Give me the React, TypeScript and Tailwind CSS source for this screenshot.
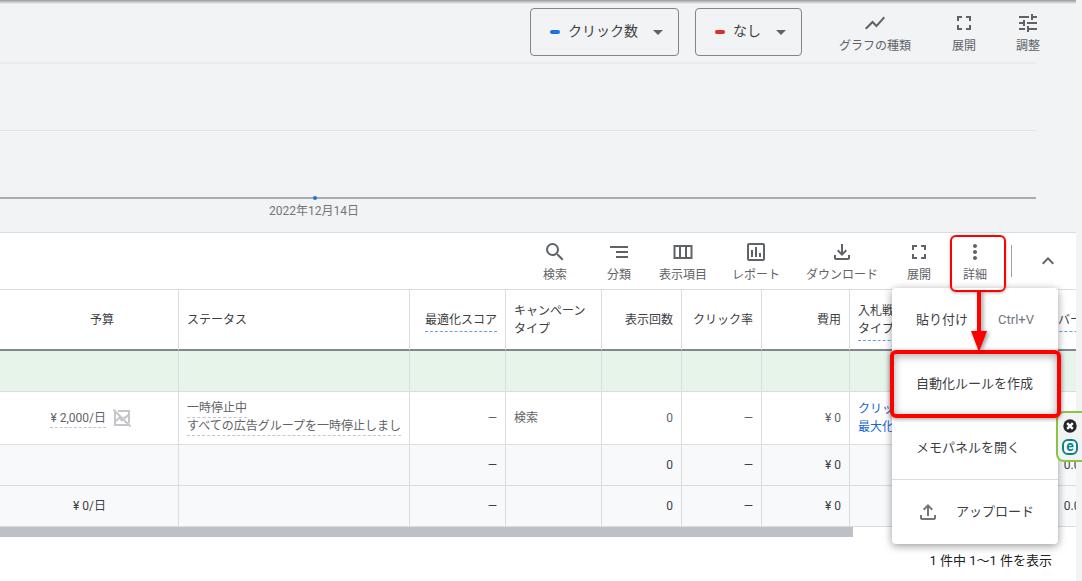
import type { ReactNode } from "react";
import type { IconType } from "react-icons";
import {
  MdArrowDropDown,
  MdExpandLess,
  MdFullscreen,
  MdMoreVert,
  MdOutlineAssessment,
  MdOutlineFileDownload,
  MdOutlineFileUpload,
  MdSearch,
  MdSegment,
  MdShowChart,
  MdTune,
} from "react-icons/md";

function ColumnsIcon({ className }: { className?: string }) {
  return (
    <svg viewBox="0 0 24 24" className={className} fill="none" stroke="currentColor" strokeWidth="2">
      <path d="M3.5 6h17v12h-17zM9 6v12M15 6v12" />
    </svg>
  );
}

function ChartOffIcon() {
  return (
    <svg viewBox="0 0 18 18" className="size-[18px] shrink-0 text-[#c4c6c9]" fill="none" stroke="currentColor" strokeWidth="2">
      <path d="M5 2h11v12M2 3v13h13" />
      <path d="M3 12l3.500-3.500L9.500 12M10.500 8l1.500 1L16 5.500" />
      <path d="M.5.8l17 16.700" />
    </svg>
  );
}

function MetricSelect({ label, options, dash }: { label: string; options: string[]; dash: string }) {
  return (
    <label className="relative flex h-12 items-center rounded border border-[#80868b] pl-[19px]">
      <span className={`h-1 w-[10px] rounded-sm ${dash}`} />
      <select aria-label={label} className="h-full appearance-none bg-transparent pr-10 pb-[2px] pl-2 text-sm text-[#3c4043] outline-none">
        {options.map((o) => (
          <option key={o}>{o}</option>
        ))}
      </select>
      <MdArrowDropDown className="pointer-events-none absolute right-2 size-6 text-[#5f6368]" />
    </label>
  );
}

function ToolButton({ icon: Icon, label, size }: { icon: IconType | typeof ColumnsIcon; label: string; size: string }) {
  return (
    <button type="button" className={`flex flex-col items-center pt-1 text-xs leading-[22px] text-[#5f6368] ${size}`}>
      <Icon className="size-6" />
      {label}
    </button>
  );
}

const tools = [
  { icon: MdSearch, label: "検索", size: "w-[72px]" },
  { icon: MdSegment, label: "分類", size: "w-14" },
  { icon: ColumnsIcon, label: "表示項目", size: "px-3" },
  { icon: MdOutlineAssessment, label: "レポート", size: "px-[13px]" },
  { icon: MdOutlineFileDownload, label: "ダウンロード", size: "px-[13px]" },
  { icon: MdFullscreen, label: "展開", size: "w-14" },
  { icon: MdMoreVert, label: "詳細", size: "w-14" },
];

function Th({ children, className = "" }: { children: ReactNode; className?: string }) {
  return <th className={`h-[61px] border-r border-b-2 border-r-[#dadce0] border-b-[#80868b] px-2 font-normal whitespace-nowrap ${className}`}>{children}</th>;
}

function Td({ children, className = "" }: { children?: ReactNode; className?: string }) {
  return <td className={`overflow-hidden border-r border-b border-[#dadce0] px-2 whitespace-nowrap ${className}`}>{children}</td>;
}

function Budget({ children, icon }: { children: ReactNode; icon?: ReactNode }) {
  return (
    <div className="flex items-center justify-end gap-[7px] pr-[39px]">
      {children}
      <span className="size-[18px]">{icon}</span>
    </div>
  );
}

function SummaryRow({ budget }: { budget?: string }) {
  return (
    <tr className="h-[41px] bg-[#f8f9fb] text-[#3c4043]">
      <Td>{budget && <Budget>{budget}</Budget>}</Td>
      <Td />
      <Td className="text-right">—</Td>
      <Td />
      <Td className="text-right">0</Td>
      <Td className="text-right">—</Td>
      <Td className="text-right">¥ 0</Td>
      <Td />
      <Td className="text-center">0.00</Td>
    </tr>
  );
}

function CampaignTable() {
  return (
    <div className="overflow-hidden">
      <table className="w-full min-w-[1126px] table-fixed border-separate border-spacing-0 text-xs leading-[18px] text-[#5f6368]">
        <colgroup>
          <col className="w-[179px]" />
          <col className="w-[231px]" />
          <col className="w-24" />
          <col className="w-24" />
          <col className="w-20" />
          <col className="w-20" />
          <col className="w-[88px]" />
          <col className="w-44" />
          <col className="w-[100px]" />
        </colgroup>
        <thead className="text-[#3c4043]">
          <tr>
            <Th className="pr-16 text-right">予算</Th>
            <Th className="text-left">ステータス</Th>
            <Th className="text-right">
              <span className="border-b border-dashed border-[#669df6] pb-1">最適化スコア</span>
            </Th>
            <Th className="text-left">キャンペーン<br />タイプ</Th>
            <Th className="text-right">表示回数</Th>
            <Th className="text-right">クリック率</Th>
            <Th className="text-right">費用</Th>
            <Th className="text-left">
              入札戦略<br />
              <span className="border-b border-dashed border-[#669df6] pb-1">タイプの設定</span>
            </Th>
            <Th className="text-left">
              <span className="border-b border-dashed border-[#669df6] pb-1">コンバージョン</span>
            </Th>
          </tr>
        </thead>
        <tbody>
          <tr className="h-[41px] bg-[#e6f4ea]">
            {Array.from({ length: 9 }, (_, i) => <Td key={i} />)}
          </tr>
          <tr className="h-[53px]">
            <Td>
              <Budget icon={<ChartOffIcon />}>
                <span className="border-b border-dashed border-[#c4c6c9]">¥ 2,000/日</span>
              </Budget>
            </Td>
            <Td>
              <div className="flex flex-col items-start">
                <span className="border-b border-dashed border-[#c4c6c9] leading-[17px]">一時停止中</span>
                <span className="border-b border-dashed border-[#c4c6c9] leading-[17px]">すべての広告グループを一時停止しまし</span>
              </div>
            </Td>
            <Td className="text-right">—</Td>
            <Td>検索</Td>
            <Td className="text-right">0</Td>
            <Td className="text-right">—</Td>
            <Td className="text-right">¥ 0</Td>
            <Td>
              <a href="#bidding" className="text-[#1967d2]">クリック数の<br />最大化</a>
            </Td>
            <Td className="text-center">0.00</Td>
          </tr>
          <SummaryRow />
          <SummaryRow budget="¥ 0/日" />
        </tbody>
      </table>
      <div className="h-[10px] w-[79.3%] bg-[#bdc1c6]" />
    </div>
  );
}

function MoreMenu() {
  return (
    <div className="absolute top-[55px] right-[18px] flex w-[166px] flex-col rounded bg-white text-[13px] text-[#3c4043] shadow-[0_2px_8px_rgba(0,0,0,0.4)]">
      <button type="button" className="flex h-16 items-center justify-between px-6">
        貼り付け
        <span className="text-[#70757a]">Ctrl+V</span>
      </button>
      <button type="button" className="h-16 px-6 text-left whitespace-nowrap">自動化ルールを作成</button>
      <button type="button" className="h-16 border-b border-[#dadce0] px-6 text-left">メモパネルを開く</button>
      <button type="button" className="flex h-16 items-center gap-4 px-6 whitespace-nowrap">
        <MdOutlineFileUpload className="size-6 text-[#757575]" />
        アップロード
      </button>
    </div>
  );
}

function SideWidget() {
  return (
    <div className="absolute top-[178px] -right-[6px] flex h-[51px] w-[26px] flex-col items-center justify-center gap-[6px] rounded-l-lg border-2 border-r-0 border-[#8bc53f] bg-[#f1f3f4]">
      <button type="button" aria-label="閉じる">
        <svg viewBox="0 0 14 14" className="size-[14px]">
          <circle cx="7" cy="7" r="6.700" fill="#24262b" />
          <path d="M4.200 4.200l5.600 5.600M9.800 4.200l-5.600 5.600" stroke="#fff" strokeWidth="2.400" />
        </svg>
      </button>
      <button type="button" className="flex size-4 items-center justify-center rounded-md border-2 border-[#0a8583] bg-white pb-[2px] text-sm leading-none font-bold text-[#0a8583]">
        e
      </button>
    </div>
  );
}

// Red callouts: toolbar button -> menu entry
function Callouts() {
  return (
    <div className="pointer-events-none">
      <div className="absolute top-[2px] right-[70px] h-[57px] w-14 rounded-md border-2 border-[#ff0000] shadow-[0_1px_3px_rgba(0,0,0,0.3)]" />
      <div className="absolute top-[117px] right-[15px] h-[68px] w-[171px] rounded-md border-4 border-[#ff0000] shadow-[0_1px_4px_rgba(0,0,0,0.4),inset_0_2px_8px_rgba(0,0,0,0.35)]" />
      <svg viewBox="0 0 16 62" className="absolute top-[58px] right-[89px] h-[62px] w-4 drop-shadow-[2px_1px_2px_rgba(0,0,0,0.4)]" fill="#ff0000">
        <path d="M6 0h4v40h6L8 61 0 40h6z" />
      </svg>
    </div>
  );
}

export default function App() {
  return (
    <div className="flex min-h-screen flex-col overflow-hidden bg-[#f1f3f4] pr-[6px] font-['Roboto','Noto_Sans_CJK_JP',sans-serif]">
      <div className="h-1 bg-linear-to-b from-[#9a9a9a] to-[#f1f3f4]" />

      {/* Chart controls */}
      <header className="flex items-center justify-end gap-4 pt-[3px] pr-4 pb-[5px]">
        <MetricSelect label="指標 1" options={["クリック数"]} dash="bg-[#1a73e8]" />
        <MetricSelect label="指標 2" options={["なし"]} dash="bg-[#d93025]" />
        <div className="flex">
          <ToolButton icon={MdShowChart} label="グラフの種類" size="px-[21px]" />
          <ToolButton icon={MdFullscreen} label="展開" size="px-5" />
          <ToolButton icon={MdTune} label="調整" size="px-5" />
        </div>
      </header>

      {/* Chart */}
      <div className="mr-10 h-[170px]">
        <div className="h-[68px] border-t-2 border-[#e8eaed]" />
        <div className="relative h-[69px] border-t border-b-2 border-t-[#e0e2e5] border-b-[#aaacaf]">
          <span className="absolute -bottom-[3px] left-[30.200%] size-1 rounded-full bg-[#1a73e8]" />
        </div>
        <div className="w-[60.600%] pt-[3px] text-center text-xs leading-[18px] text-[#757575]">2022年12月14日</div>
      </div>

      <section className="relative flex-1 border-t border-[#dadce0] bg-white">
        <div className="flex h-[57px] items-center justify-end border-b border-[#dadce0] pr-4">
          {tools.map((t) => (
            <ToolButton key={t.label} {...t} />
          ))}
          <span className="ml-2 h-8 w-px bg-[#9aa0a6]" />
          <button type="button" aria-label="折りたたむ" className="pl-6 text-[#5f6368]">
            <MdExpandLess className="size-6" />
          </button>
        </div>
        <CampaignTable />
        <div className="py-[14px] pr-6 text-right text-[13px] leading-5 text-[#202124]">1 件中 1～1 件を表示</div>
        <MoreMenu />
        <SideWidget />
        <Callouts />
      </section>
    </div>
  );
}
